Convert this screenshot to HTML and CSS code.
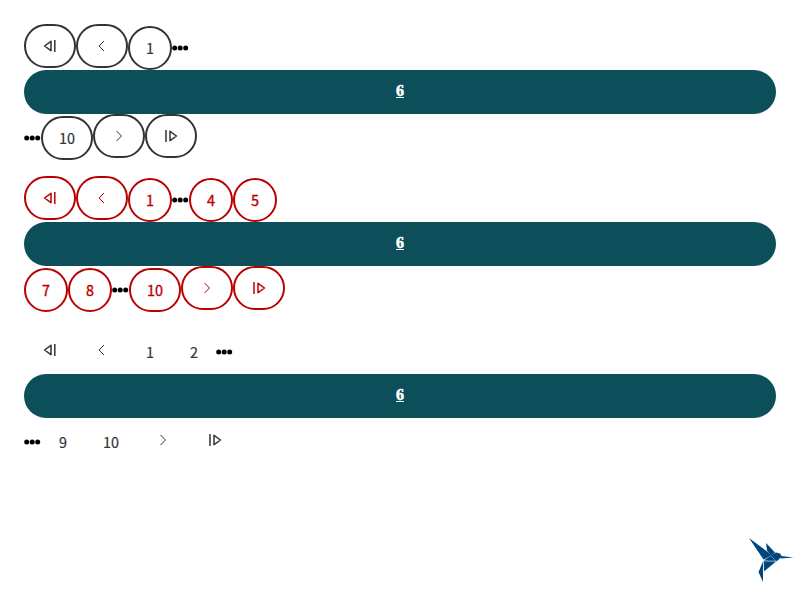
FILE: index.html
```html
<!DOCTYPE html>
<html lang="en">
<head>
<meta charset="utf-8">
<title>Pagination</title>
<link rel="stylesheet" href="styles.css">
</head>
<body>
<svg class="defs" width="0" height="0">
  <symbol id="first" viewBox="0 0 16 16"><path d="M9 3.3V12.7L2.5 8Z" fill="none" stroke="currentColor" stroke-width="1.5" stroke-linejoin="round"/><path d="M12.8 2v12" stroke="currentColor" stroke-width="1.5"/></symbol>
  <symbol id="prev" viewBox="0 0 16 16"><path d="M10 3L5 8l5 5" fill="none" stroke="currentColor" stroke-width="1"/></symbol>
  <symbol id="next" viewBox="0 0 16 16"><path d="M5.5 3l5 5-5 5" fill="none" stroke="currentColor" stroke-width="1"/></symbol>
  <symbol id="last" viewBox="0 0 16 16"><path d="M7 3.3V12.7L13.5 8Z" fill="none" stroke="currentColor" stroke-width="1.5" stroke-linejoin="round"/><path d="M3 2v12" stroke="currentColor" stroke-width="1.5"/></symbol>
  <symbol id="dots" viewBox="0 0 17 6"><circle cx="2.7" cy="3" r="2.5"/><circle cx="8.2" cy="3" r="2.5"/><circle cx="13.7" cy="3" r="2.5"/></symbol>
</svg>
<main class="page">
  <nav class="pager outline">
    <div class="row">
      <a class="btn icon"><svg><use href="#first"/></svg></a><a class="btn icon"><svg><use href="#prev"/></svg></a><a class="btn">1</a><svg class="dots"><use href="#dots"/></svg>
    </div>
    <a class="current">6</a>
    <div class="row">
      <svg class="dots"><use href="#dots"/></svg><a class="btn wide">10</a><a class="btn icon"><svg><use href="#next"/></svg></a><a class="btn icon"><svg><use href="#last"/></svg></a>
    </div>
  </nav>
  <nav class="pager danger">
    <div class="row">
      <a class="btn icon"><svg><use href="#first"/></svg></a><a class="btn icon"><svg><use href="#prev"/></svg></a><a class="btn">1</a><svg class="dots"><use href="#dots"/></svg><a class="btn">4</a><a class="btn">5</a>
    </div>
    <a class="current">6</a>
    <div class="row">
      <a class="btn">7</a><a class="btn">8</a><svg class="dots"><use href="#dots"/></svg><a class="btn wide">10</a><a class="btn icon"><svg><use href="#next"/></svg></a><a class="btn icon"><svg><use href="#last"/></svg></a>
    </div>
  </nav>
  <nav class="pager plain">
    <div class="row">
      <a class="btn icon"><svg><use href="#first"/></svg></a><a class="btn icon"><svg><use href="#prev"/></svg></a><a class="btn">1</a><a class="btn">2</a><svg class="dots"><use href="#dots"/></svg>
    </div>
    <a class="current">6</a>
    <div class="row">
      <svg class="dots"><use href="#dots"/></svg><a class="btn">9</a><a class="btn wide">10</a><a class="btn icon"><svg><use href="#next"/></svg></a><a class="btn icon"><svg><use href="#last"/></svg></a>
    </div>
  </nav>
</main>
<svg class="bird" viewBox="0 0 50 50"><g fill="#00457c"><path d="M3 3L22.5 17.5 26 21 17.5 24.5Z"/><path d="M20 8L29 17.5 25 20.5 21 15.5Z"/><path d="M24 20.5L30 17.5 34 18.5 36 21.5 30.5 26.5 17.5 25.5Z"/><path d="M35 21L47.5 22.6 35 23.6Z"/><path d="M17.5 26L30 26.6 18 36.5Z"/><path d="M17 26.5V47L12.5 37Z"/></g><path d="M17.5 25.2L24.5 21M25 20.5L29.5 26M17.5 26H31M17.6 26V37" fill="none" stroke="#fff" stroke-width=".4"/></svg>
</body>
</html>
```
FILE: styles.css
```css
body {
  margin: 0;
  background: #fff;
  font-family: "Noto Sans CJK SC", sans-serif;
  font-size: 14.4px;
}
.defs { position: absolute; }
.page {
  display: flex;
  flex-direction: column;
  gap: 16px;
  padding: 24px;
}
.pager {
  color: #333;
  -webkit-text-stroke: 0.2px currentColor;
}
.danger {
  color: #ba0000;
  -webkit-text-stroke-width: 0.35px;
}
.row {
  display: flex;
  align-items: flex-end;
  height: 46px;
}
.btn {
  box-sizing: border-box;
  display: flex;
  align-items: center;
  justify-content: center;
  width: 44px;
  height: 44px;
  padding-bottom: 2px;
  border: 2px solid currentColor;
  border-radius: 22px;
}
.wide { width: 52px; }
.plain .btn { border-color: transparent; }
.icon {
  width: 52px;
  padding-bottom: 0;
  align-self: flex-start;
}
.icon svg {
  flex: none;
  width: 16px;
  height: 16px;
}
.dots {
  width: 17px;
  height: 6px;
  margin-bottom: 18.7px;
  fill: #000;
}
.current {
  box-sizing: border-box;
  display: flex;
  align-items: center;
  justify-content: center;
  height: 44px;
  padding-bottom: 2px;
  border-radius: 22px;
  background: #0c4f5a;
  color: #fff;
  font: bold 16px "Liberation Serif", serif;
  -webkit-text-stroke: 0.5px #fff;
  text-decoration: underline;
}
.bird {
  position: fixed;
  left: 746px;
  top: 535px;
  width: 50px;
  height: 50px;
}
```
